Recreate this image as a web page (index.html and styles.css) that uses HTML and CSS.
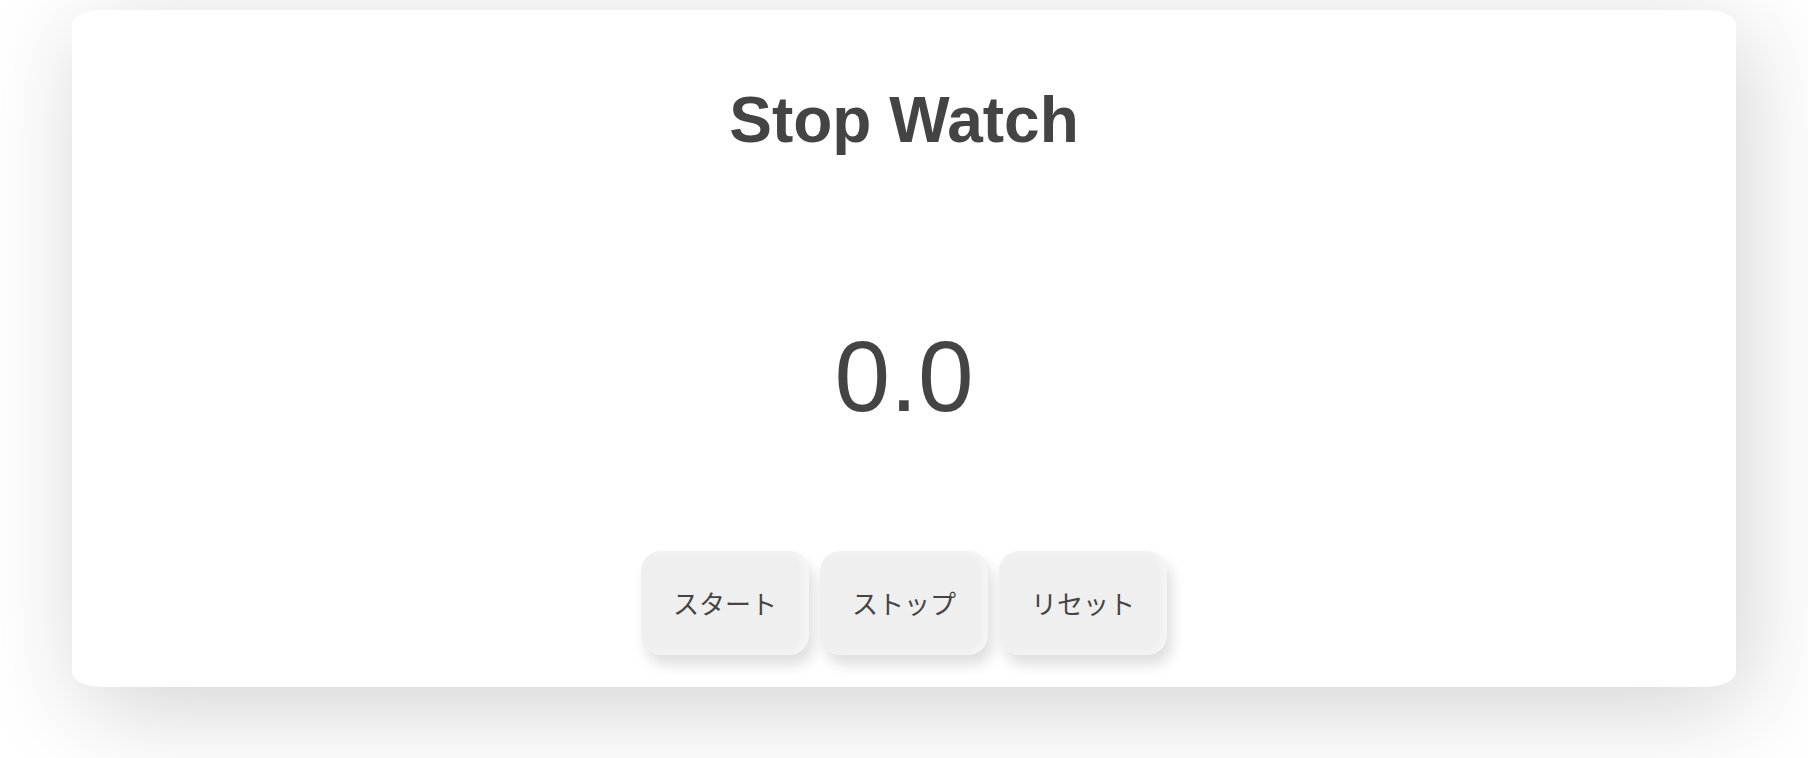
FILE: index.html
```html
<!DOCTYPE html>
<html lang="ja">
<head>
<meta charset="utf-8">
<title>Stop Watch</title>
<link rel="stylesheet" href="styles.css">
</head>
<body>
<main class="card">
  <h1 class="title">Stop Watch</h1>
  <div class="time">0.0</div>
  <div class="controls">
    <button class="btn" type="button">スタート</button>
    <button class="btn" type="button">ストップ</button>
    <button class="btn" type="button">リセット</button>
  </div>
</main>
</body>
</html>
```
FILE: styles.css
```css
html, body {
  margin: 0;
  padding: 0;
  background: #ffffff;
  height: 100%;
  overflow: hidden;
}

body {
  font-family: "Liberation Sans", Arial, "Noto Sans CJK JP", sans-serif;
  color: #444444;
}

.card {
  width: 92%;
  margin: 10px auto 0;
  background: #ffffff;
  border-radius: 30px / 15px;
  box-shadow: 10px 20px 100px rgba(0, 0, 0, 0.18);
  text-align: center;
  padding: 77px 0 32px;
  box-sizing: border-box;
  display: flex;
  flex-direction: column;
  align-items: center;
}

.title {
  margin: 0;
  font-size: 64px;
  line-height: 66px;
  font-weight: 700;
  letter-spacing: 0;
  color: #444444;
}

.time {
  margin-top: 173px;
  font-size: 100px;
  line-height: 100px;
  font-weight: 400;
  color: #444444;
}

.controls {
  margin-top: 125px;
  display: flex;
  gap: 11px;
  justify-content: center;
}

.btn {
  font-family: "Noto Sans CJK JP", sans-serif;
  font-size: 26px;
  line-height: 34px;
  color: #444444;
  background: #efefef;
  border: none;
  border-radius: 20px;
  padding: 35px 32px;
  box-shadow: 5px 10px 14px rgba(0, 0, 0, 0.13), inset -4px 0 8px rgba(255, 255, 255, 0.5);
  cursor: pointer;
}
```
